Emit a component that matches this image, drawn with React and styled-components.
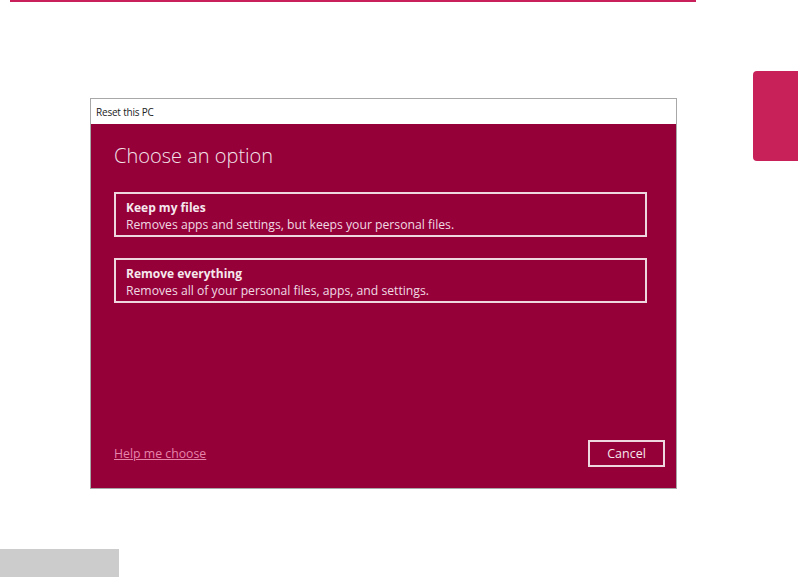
import React from 'react';
import styled, { createGlobalStyle } from 'styled-components';

const GlobalStyle = createGlobalStyle`
  html, body {
    margin: 0;
    padding: 0;
    background: #ffffff;
  }
  body {
    font-family: "Open Sans", "Noto Sans", sans-serif;
  }
`;

const options = [
  { title: 'Keep my files', desc: 'Removes apps and settings, but keeps your personal files.' },
  { title: 'Remove everything', desc: 'Removes all of your personal files, apps, and settings.' },
];

function App() {
  return (
    <Page>
      <GlobalStyle />
      <TopRule />
      <SideTab />

      <Dialog>
        <TitleBar>Reset this PC</TitleBar>
        <Body>
          <Heading>Choose an option</Heading>
          <OptionList>
            {options.map((o) => (
              <Option key={o.title}>
                <OptionTitle>{o.title}</OptionTitle>
                <OptionDesc>{o.desc}</OptionDesc>
              </Option>
            ))}
          </OptionList>
          <Footer>
            <HelpLink href="#">Help me choose</HelpLink>
            <CancelButton>Cancel</CancelButton>
          </Footer>
        </Body>
      </Dialog>

      <PageMarker />
    </Page>
  );
}
export default App;

const Page = styled.div`
  position: relative;
  width: 798px;
  height: 577px;
  overflow: hidden;
  display: flex;
  flex-direction: column;
`;

const TopRule = styled.div`
  margin-left: 10px;
  width: 686px;
  height: 2px;
  background: #c91f5b;
`;

const SideTab = styled.div`
  position: absolute;
  right: 0;
  top: 71px;
  width: 45px;
  height: 90px;
  background: #c8215a;
  border-radius: 4px 0 0 4px;
`;

const Dialog = styled.div`
  margin: 96px 0 0 90px;
  width: 585px;
  height: 389px;
  border: 1px solid #a8a8a8;
  display: flex;
  flex-direction: column;
`;

const TitleBar = styled.div`
  height: 25px;
  background: #ffffff;
  display: flex;
  align-items: center;
  padding-left: 5px;
  font-size: 10px;
  color: #222;
  letter-spacing: -0.2px;
`;

const Body = styled.div`
  flex: 1;
  background: #950039;
  padding: 18px 29px 21px 23px;
  display: flex;
  flex-direction: column;
`;

const Heading = styled.h1`
  margin: 0;
  font-size: 20px;
  font-weight: 300;
  color: #f4e4ea;
  line-height: 28px;
`;

const OptionList = styled.div`
  margin-top: 22px;
  display: flex;
  flex-direction: column;
  gap: 21px;
`;

const Option = styled.div`
  height: 45px;
  box-sizing: border-box;
  border: 2px solid #efd7df;
  padding: 6px 10px 4px;
  display: flex;
  flex-direction: column;
  justify-content: center;
  color: #f6e8ed;
`;

const OptionTitle = styled.div`
  font-size: 12px;
  font-weight: 700;
  line-height: 17px;
`;

const OptionDesc = styled.div`
  font-size: 12.2px;
  line-height: 17px;
  color: #f0dae2;
`;

const Footer = styled.div`
  margin-top: auto;
  margin-right: -18px;
  display: flex;
  align-items: center;
  justify-content: space-between;
`;

const HelpLink = styled.a`
  font-size: 12.3px;
  color: #e684aa;
  text-decoration: underline;
`;

const CancelButton = styled.button`
  width: 77px;
  height: 27px;
  box-sizing: border-box;
  border: 2px solid #efd7df;
  background: transparent;
  color: #f6e8ed;
  font-family: inherit;
  font-size: 12.5px;
  padding: 0;
`;

const PageMarker = styled.div`
  margin-top: auto;
  width: 119px;
  height: 28px;
  background: #cccccc;
`;
